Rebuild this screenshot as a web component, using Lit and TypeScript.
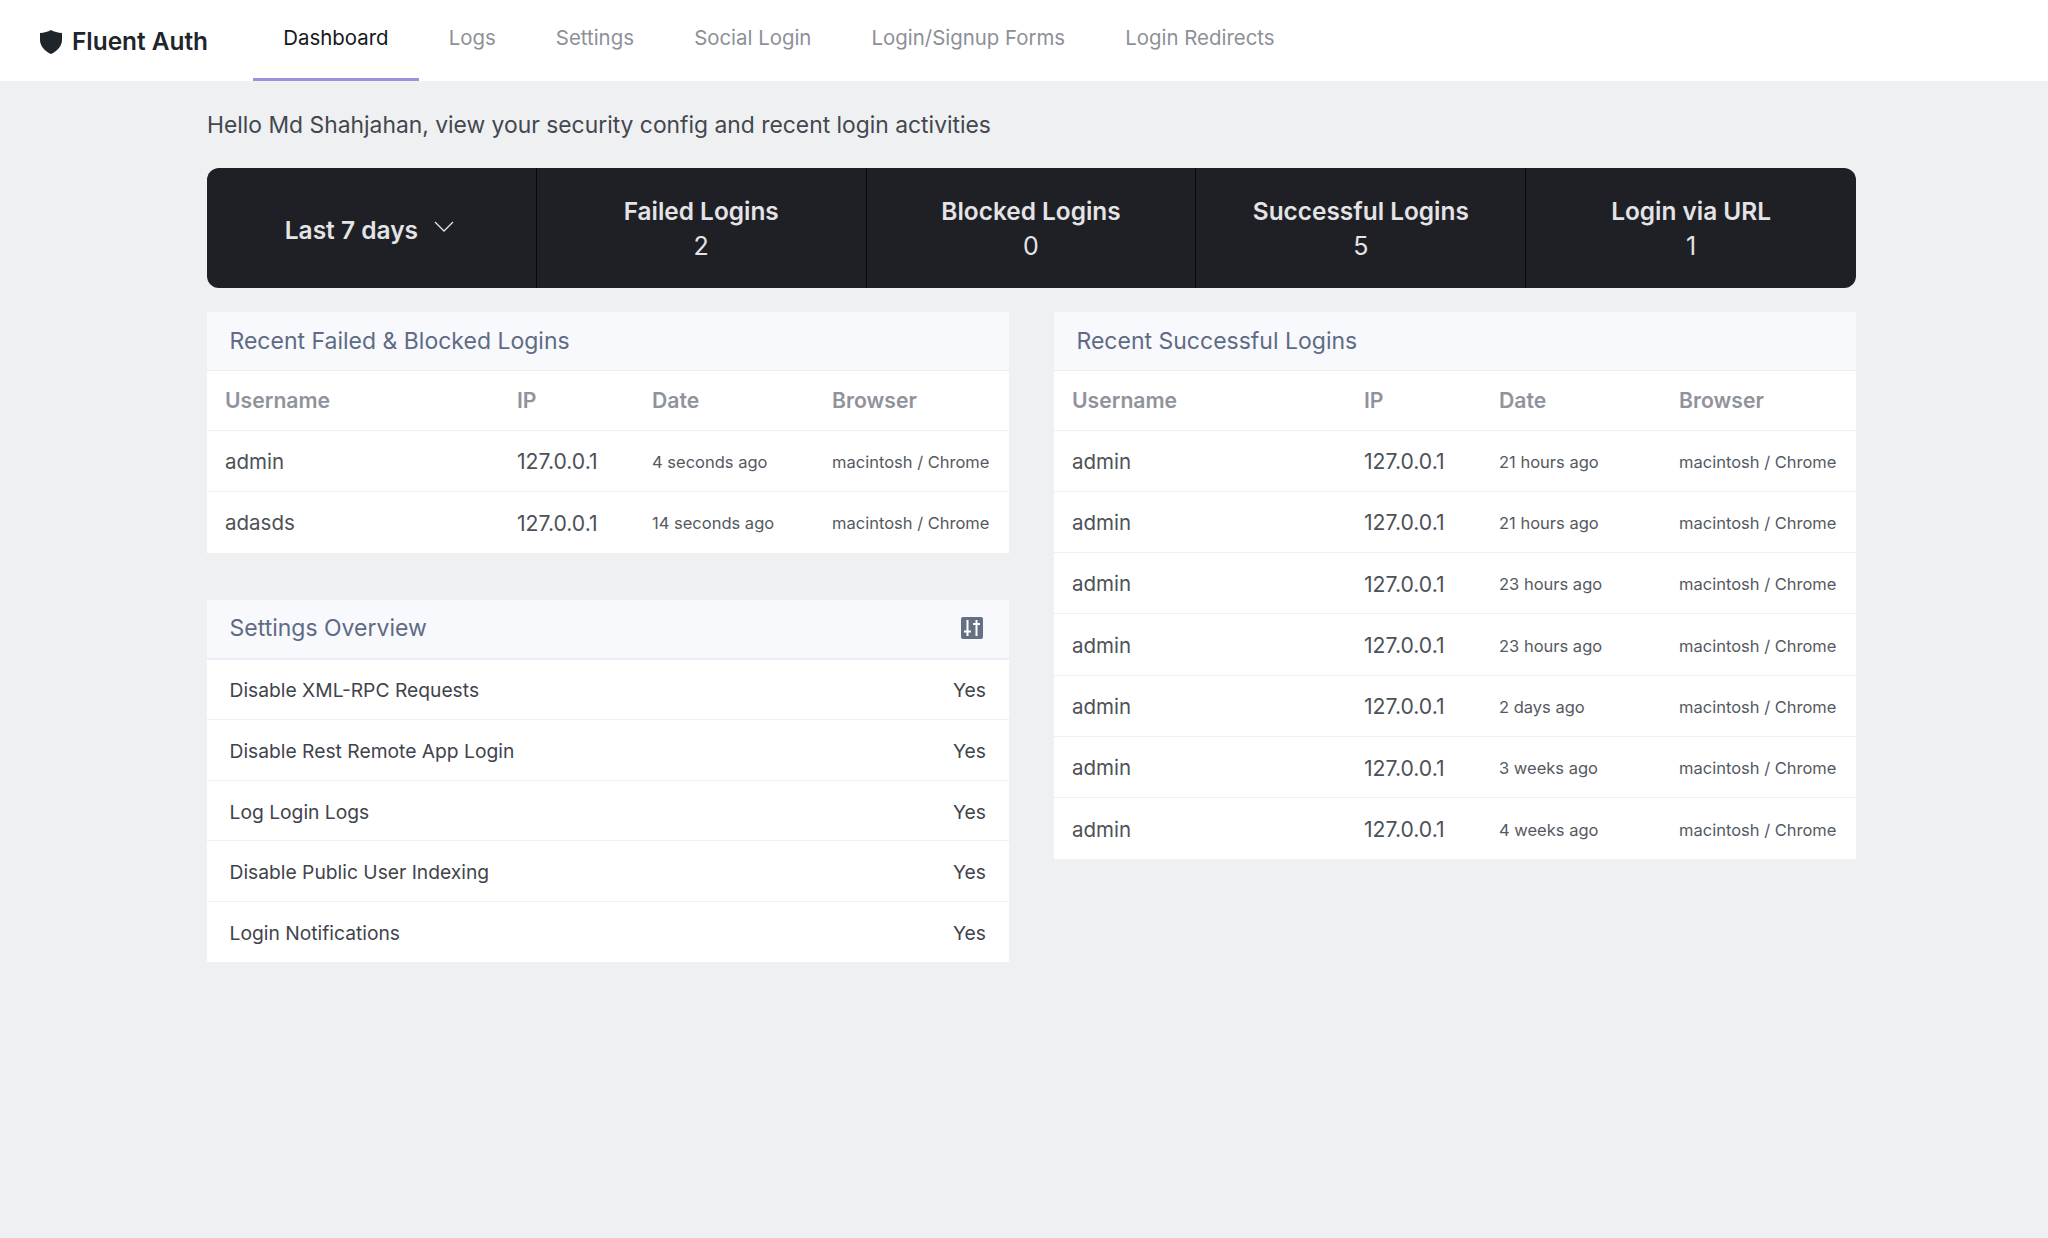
import { LitElement, html, css } from "lit";
import { customElement } from "lit/decorators.js";

const failed = [
  ["admin", "127.0.0.1", "4 seconds ago", "macintosh / Chrome"],
  ["adasds", "127.0.0.1", "14 seconds ago", "macintosh / Chrome"],
];
const ok = [
  "21 hours ago", "21 hours ago", "23 hours ago", "23 hours ago", "2 days ago", "3 weeks ago", "4 weeks ago",
].map((d) => ["admin", "127.0.0.1", d, "macintosh / Chrome"]);
const settings = ["Disable XML-RPC Requests", "Disable Rest Remote App Login", "Log Login Logs", "Disable Public User Indexing", "Login Notifications"];
const tabs = ["Dashboard", "Logs", "Settings", "Social Login", "Login/Signup Forms", "Login Redirects"];
const stats = [["Failed Logins", "2"], ["Blocked Logins", "0"], ["Successful Logins", "5"], ["Login via URL", "1"]];

@customElement("app-root")
export class AppRoot extends LitElement {
  static styles = css`
    :host { display: block; min-height: 1238px; background: #eff0f2; font-family: Inter, "Liberation Sans", sans-serif; color: #3f444c; }
    * { box-sizing: border-box; }
    .nav { display: flex; height: 81px; background: #fff; padding-left: 40px; }
    .logo { display: flex; align-items: center; gap: 10px; width: 213.2px; font-size: 24.4px; font-weight: 600; color: #1e252b; white-space: nowrap; }
    .logo svg { margin-top: 3px; }
    .tab { padding: 24.5px 30.1px 0; font-size: 20.4px; line-height: 26px; color: #8d9098; border-bottom: 3px solid transparent; white-space: nowrap; }
    .tab.on { color: #15181c; border-bottom-color: #a08fdc; }
    .main { padding: 29px 192px 0 207px; }
    .hello { font-size: 22.85px; line-height: 30px; margin-bottom: 28px; color: #43474e; }
    .bar { display: grid; grid-template-columns: repeat(5, 1fr); height: 120px; background: #1f2025; border-radius: 12px; color: #e4e4e6; margin-bottom: 24px; }
    .cell { display: flex; flex-direction: column; align-items: center; justify-content: center; padding-top: 1px; border-right: 1px solid #08080a; }
    .cell:last-child { border-right: 0; }
    .cell.first { flex-direction: row; gap: 16px; font-size: 24.5px; font-weight: 600; padding: 4px 4px 0 0; }
    .cell.first svg { margin-top: -8px; }
    .stat-t { font-size: 24.4px; font-weight: 600; line-height: 34.5px; }
    .stat-v { font-size: 25px; line-height: 34.5px; }
    .cols { display: flex; gap: 45px; align-items: flex-start; }
    .col { flex: 1; display: flex; flex-direction: column; gap: 47px; min-width: 0; }
    .panel { background: #fff; }
    .head { display: flex; justify-content: space-between; align-items: center; height: 59px; padding: 0 26px 1px 22.5px; background: #f7f9fc; border-bottom: 1.5px solid #e9edf2; font-size: 23px; color: #5f6b84; }
    table { width: 100%; border-collapse: collapse; table-layout: fixed; }
    th, td { padding: 1px 0 0 18px; text-align: left; height: 61.3px; white-space: nowrap; border-top: 1.5px solid #edf0f4; font-size: 21.2px; color: #4d5158; font-weight: 400; }
    tr:first-child th { border-top: 0; height: 59px; padding: 0 0 1px 18px; }
    th { font-weight: 600; color: #90939b; }
    td.u { font-size: 20.5px; }
    td.d, td.b { font-size: 16.5px; color: #55595f; padding-top: 2px; }
    .row { display: flex; justify-content: space-between; align-items: center; height: 60.6px; padding: 2px 23px 0 22.5px; border-top: 1.5px solid #edf0f4; font-size: 19.25px; color: #3f444c; }
    .row:first-of-type { border-top: 0; }
  `;

  private table(rows: string[][]) {
    return html`<table>
      <colgroup><col style="width:292px" /><col style="width:135px" /><col style="width:180px" /><col /></colgroup>
      <thead><tr><th>Username</th><th>IP</th><th>Date</th><th>Browser</th></tr></thead>
      <tbody>${rows.map((r) => html`<tr><td class="u">${r[0]}</td><td>${r[1]}</td><td class="d">${r[2]}</td><td class="b">${r[3]}</td></tr>`)}</tbody>
    </table>`;
  }

  render() {
    return html`
      <div class="nav">
        <div class="logo">
          <svg width="22" height="24" viewBox="0 0 22 24"><path fill="#1e252b" d="M11 0C14 1.8 18 2.8 22 3V10C22 16 17 21.5 11 24C5 21.5 0 16 0 10V3C4 2.8 8 1.8 11 0Z" /></svg>
          <span>Fluent Auth</span>
        </div>
        ${tabs.map((t, i) => html`<div class="tab ${i === 0 ? "on" : ""}">${t}</div>`)}
      </div>
      <div class="main">
        <div class="hello">Hello Md Shahjahan, view your security config and recent login activities</div>
        <div class="bar">
          <div class="cell first"><span>Last 7 days</span>
            <svg width="20" height="11" viewBox="0 0 20 11"><path d="M1 1L10 10L19 1" fill="none" stroke="#e4e4e6" stroke-width="1.3" /></svg>
          </div>
          ${stats.map((s) => html`<div class="cell"><div class="stat-t">${s[0]}</div><div class="stat-v">${s[1]}</div></div>`)}
        </div>
        <div class="cols">
          <div class="col">
            <div class="panel"><div class="head">Recent Failed &amp; Blocked Logins</div>${this.table(failed)}</div>
            <div class="panel">
              <div class="head"><span>Settings Overview</span>
                <svg width="22" height="22" viewBox="0 0 22 22"><rect width="22" height="22" rx="2" fill="#667085" /><path d="M6.5 3V19M15.5 3V19M3 14.5H10M12 7H19" stroke="#fff" stroke-width="2" fill="none" /></svg>
              </div>
              ${settings.map((s) => html`<div class="row"><span>${s}</span><span>Yes</span></div>`)}
            </div>
          </div>
          <div class="col">
            <div class="panel"><div class="head">Recent Successful Logins</div>${this.table(ok)}</div>
          </div>
        </div>
      </div>
    `;
  }
}
